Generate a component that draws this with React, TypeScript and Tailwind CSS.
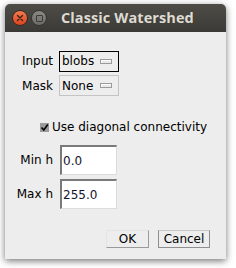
import React from "react";

function ChoiceIndicator() {
  return <span className="inline-block w-[12px] h-[5px] border border-[#9a9a9a] bg-[#e8e8e8] shadow-[inset_1px_1px_0_#ffffff]" />;
}

function Choice({ value, focused }: { value: string; focused?: boolean }) {
  return (
    <div
      className={`flex items-center justify-between w-[60px] h-[21px] pl-[2px] pr-[6px] border ${
        focused ? "border-black" : "border-[#c4c4c4]"
      } bg-[#ededed]`}
    >
      <span>{value}</span>
      <ChoiceIndicator />
    </div>
  );
}

function Field({ value }: { value: string }) {
  return (
    <div className="w-[57px] h-[30px] bg-white border-t-2 border-l-2 border-t-[#7a7a7a] border-l-[#7a7a7a] border-r border-b border-r-[#dcdcdc] border-b-[#dcdcdc] flex items-center pl-[1px] text-[#14142e]">
      {value}
    </div>
  );
}

export default function App() {
  return (
    <div className="w-[236px] h-[268px] bg-white relative overflow-hidden" style={{ fontFamily: '"DejaVu Sans", sans-serif' }}>
      <div className="absolute left-[5px] top-[4px] w-[221px] h-[255px] rounded-t-[5px] shadow-[0_2px_7px_rgba(0,0,0,0.55)] flex flex-col bg-[#ededed]">
        <div className="h-[28px] rounded-t-[5px] bg-gradient-to-b from-[#4e4c47] to-[#3b3a36] flex items-center pl-[7px]">
          <div className="w-[16px] h-[16px] rounded-full bg-gradient-to-b from-[#f27a4e] to-[#d9431c] border border-[#3a2a22] flex items-center justify-center">
            <svg width="8" height="8" viewBox="0 0 8 8">
              <path d="M1.5 1.5 L6.5 6.5 M6.5 1.5 L1.5 6.5" stroke="#3b2016" strokeWidth="1.4" strokeLinecap="round" />
            </svg>
          </div>
          <div className="ml-[3px] w-[16px] h-[16px] rounded-full bg-gradient-to-b from-[#8a8984] to-[#6c6b67] border border-[#35342f] flex items-center justify-center">
            <div className="w-[7px] h-[7px] border border-[#3c3b37] rounded-[1px]" />
          </div>
          <span
            className="ml-[14px] text-[#dfdbd2] text-[14.5px] font-bold tracking-[0.1px]"
            style={{ fontFamily: '"Open Sans", sans-serif' }}
          >
            Classic Watershed
          </span>
        </div>
        <div className="flex flex-col text-[12px] text-black pt-[18px]">
          <div className="flex items-center h-[22px]">
            <span className="w-[48px] text-right">Input</span>
            <div className="ml-[6px]">
              <Choice value="blobs" focused />
            </div>
          </div>
          <div className="flex items-center h-[21px] mt-[3px]">
            <span className="w-[48px] text-right">Mask</span>
            <div className="ml-[6px]">
              <Choice value="None" />
            </div>
          </div>
          <div className="flex items-center mt-[23px] ml-[35px] h-[16px]">
            <div className="w-[9px] h-[9px] bg-[#9a9a9a] flex items-center justify-center">
              <svg width="9" height="9" viewBox="0 0 9 9">
                <path d="M1.5 4.5 L3.8 7 L7.8 1.5" stroke="#000" strokeWidth="1.6" fill="none" />
              </svg>
            </div>
            <span className="ml-[3px]">Use diagonal connectivity</span>
          </div>
          <div className="flex items-center mt-[10px]">
            <span className="w-[48px] text-right">Min h</span>
            <div className="ml-[7px]">
              <Field value="0.0" />
            </div>
          </div>
          <div className="flex items-center mt-[4px]">
            <span className="w-[48px] text-right">Max h</span>
            <div className="ml-[7px]">
              <Field value="255.0" />
            </div>
          </div>
          <div className="flex justify-end gap-[9px] mt-[21px] pr-[16px]">
            <div className="w-[43px] h-[18px] flex items-center justify-center border-t border-l border-t-[#e4e4e4] border-l-[#e4e4e4] border-r border-b border-r-[#9a9a9a] border-b-[#9a9a9a]">
              OK
            </div>
            <div className="w-[52px] h-[18px] flex items-center justify-center border border-[#8e8e8e] border-t-[#c8c8c8]">
              Cancel
            </div>
          </div>
        </div>
      </div>
    </div>
  );
}
